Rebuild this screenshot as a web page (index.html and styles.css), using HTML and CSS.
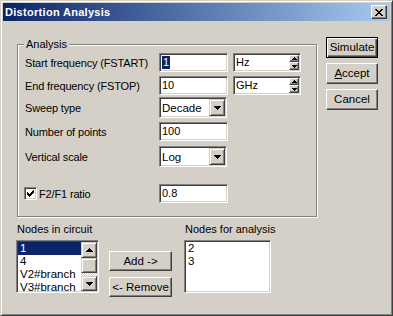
FILE: index.html
```html
<!DOCTYPE html>
<html>
<head>
<meta charset="utf-8">
<link rel="stylesheet" href="styles.css">
</head>
<body>
<div class="window">
  <div class="titlebar">
    <span class="title">Distortion Analysis</span>
    <div class="close raised">
      <svg width="8" height="7" viewBox="0 0 8 7"><path d="M0 0h2v1H0zM6 0h2v1H6zM1 1h2v1H1zM5 1h2v1H5zM2 2h4v1H2zM3 3h2v1H3zM2 4h4v1H2zM1 5h2v1H1zM5 5h2v1H5zM0 6h2v1H0zM6 6h2v1H6z" fill="#000"/></svg>
    </div>
  </div>
  <div class="client">
    <div class="main">
      <div class="group">
        <span class="group-label">Analysis</span>
        <div class="row r1">
          <span class="lbl">Start frequency (FSTART)</span>
          <div class="edit"><span class="hl">1</span></div>
          <div class="edit spin">
            <span class="spin-text">Hz</span>
            <div class="spinbtns">
              <div class="sbtn up raised"><svg width="5" height="3" viewBox="0 0 5 3"><path d="M2 0h1v1H2zM1 1h3v1H1zM0 2h5v1H0z"/></svg></div>
              <div class="sbtn dn raised"><svg width="5" height="3" viewBox="0 0 5 3"><path d="M0 0h5v1H0zM1 1h3v1H1zM2 2h1v1H2z"/></svg></div>
            </div>
          </div>
        </div>
        <div class="row r2">
          <span class="lbl">End frequency (FSTOP)</span>
          <div class="edit">10</div>
          <div class="edit spin">
            <span class="spin-text">GHz</span>
            <div class="spinbtns">
              <div class="sbtn up raised"><svg width="5" height="3" viewBox="0 0 5 3"><path d="M2 0h1v1H2zM1 1h3v1H1zM0 2h5v1H0z"/></svg></div>
              <div class="sbtn dn raised"><svg width="5" height="3" viewBox="0 0 5 3"><path d="M0 0h5v1H0zM1 1h3v1H1zM2 2h1v1H2z"/></svg></div>
            </div>
          </div>
        </div>
        <div class="row r3">
          <span class="lbl">Sweep type</span>
          <div class="combo">
            <span class="combo-text">Decade</span>
            <div class="dropbtn raised"><svg width="7" height="4" viewBox="0 0 7 4"><path d="M0 0h7v1H0zM1 1h5v1H1zM2 2h3v1H2zM3 3h1v1H3z"/></svg></div>
          </div>
        </div>
        <div class="row r4">
          <span class="lbl">Number of points</span>
          <div class="edit">100</div>
        </div>
        <div class="row r5">
          <span class="lbl">Vertical scale</span>
          <div class="combo">
            <span class="combo-text">Log</span>
            <div class="dropbtn raised"><svg width="7" height="4" viewBox="0 0 7 4"><path d="M0 0h7v1H0zM1 1h5v1H1zM2 2h3v1H2zM3 3h1v1H3z"/></svg></div>
          </div>
        </div>
        <div class="row r6">
          <span class="lbl chk-lbl">
            <span class="chk"><svg width="7" height="7" viewBox="0 0 7 7"><path d="M6 0h1v1H6zM5 1h2v1H5zM0 2h1v1H0zM4 2h3v1H4zM0 3h2v1H0zM3 3h3v1H3zM0 4h5v1H0zM1 5h3v1H1zM2 6h1v1H2z"/></svg></span>F2/F1 ratio
          </span>
          <div class="edit">0.8</div>
        </div>
      </div>
      <div class="nodes">
        <div class="ncol left">
          <div class="nlabel">Nodes in circuit</div>
          <div class="list list-left">
            <div class="items">
              <div class="item selected">1</div>
              <div class="item">4</div>
              <div class="item">V2#branch</div>
              <div class="item">V3#branch</div>
            </div>
            <div class="scrollbar">
              <div class="sb-btn sb-up"><svg width="7" height="4" viewBox="0 0 7 4"><path d="M3 0h1v1H3zM2 1h3v1H2zM1 2h5v1H1zM0 3h7v1H0z"/></svg></div>
              <div class="sb-thumb"></div>
              <div class="sb-track"></div>
              <div class="sb-btn sb-dn"><svg width="7" height="4" viewBox="0 0 7 4"><path d="M0 0h7v1H0zM1 1h5v1H1zM2 2h3v1H2zM3 3h1v1H3z"/></svg></div>
            </div>
          </div>
        </div>
        <div class="mid-btns">
          <div class="btn mid">Add -&gt;</div>
          <div class="btn mid">&lt;- Remove</div>
        </div>
        <div class="ncol right">
          <div class="nlabel">Nodes for analysis</div>
          <div class="list list-right">
            <div class="items">
              <div class="item">2</div>
              <div class="item">3</div>
            </div>
          </div>
        </div>
      </div>
    </div>
    <div class="side">
      <div class="btn side-btn default">Simulate</div>
      <div class="btn side-btn"><span class="ul">A</span>ccept</div>
      <div class="btn side-btn">Cancel</div>
    </div>
  </div>
</div>
</body>
</html>
```

FILE: styles.css
```css
html, body {
  margin: 0;
  padding: 0;
  background: #d4d0c8;
}

body {
  font-family: "Liberation Sans", Arial, sans-serif;
  font-size: 11px;
  color: #000;
}

.window {
  width: 393px;
  height: 316px;
  box-sizing: border-box;
  background: #d4d0c8;
  border: 1px solid;
  border-color: #d4d0c8 #404040 #404040 #d4d0c8;
  box-shadow: inset 1px 1px #fff, inset -1px -1px #808080;
  padding: 2px;
  display: flex;
  flex-direction: column;
}

.titlebar {
  height: 18px;
  flex: none;
  display: flex;
  align-items: center;
  padding: 0 3px 0 2px;
  background: linear-gradient(to right, #0a246a, #a6caf0);
  color: #fff;
}

.title {
  font-weight: bold;
  font-size: 11px;
  letter-spacing: 0.3px;
  line-height: 13px;
}

.raised {
  box-sizing: border-box;
  background: #d4d0c8;
  border: 1px solid;
  border-color: #fff #404040 #404040 #fff;
  box-shadow: inset -1px -1px #808080;
  display: flex;
  align-items: center;
  justify-content: center;
}

.close {
  margin-left: auto;
  width: 16px;
  height: 14px;
}

.close svg {
  margin-left: -1px;
}

.client {
  display: flex;
  padding-left: 14px;
}

.main {
  width: 301px;
  flex: none;
}

.group {
  position: relative;
  margin-top: 23px;
  width: 300px;
  box-sizing: border-box;
  border: 1px solid #808080;
  box-shadow: inset 1px 1px #fff, 1px 1px #fff;
  padding: 8px 0 13px 7px;
}

.group-label {
  position: absolute;
  top: -7px;
  left: 6px;
  padding: 0 2px 0 2px;
  background: #d4d0c8;
  line-height: 13px;
}

.row {
  display: flex;
  align-items: center;
}

.r1 { height: 19px; }
.r2 { height: 19px; margin-top: 4px; }
.r3 { height: 21px; margin-top: 2px; }
.r4 { height: 19px; margin-top: 4px; }
.r5 { height: 21px; margin-top: 5px; }
.r6 { height: 19px; margin-top: 17px; }

.lbl {
  width: 134px;
  flex: none;
  white-space: nowrap;
  letter-spacing: -0.15px;
}

.chk-lbl {
  display: flex;
  align-items: center;
}

.chk {
  width: 13px;
  height: 13px;
  box-sizing: border-box;
  margin-left: -1px;
  margin-right: 2px;
  background: #fff;
  border: 1px solid;
  border-color: #808080 #fff #fff #808080;
  box-shadow: inset 1px 1px #404040, inset -1px -1px #d4d0c8;
  display: flex;
  align-items: center;
  justify-content: center;
}

.edit {
  width: 69px;
  height: 19px;
  flex: none;
  box-sizing: border-box;
  background: #fff;
  border: 1px solid;
  border-color: #808080 #fff #fff #808080;
  box-shadow: inset 1px 1px #404040, inset -1px -1px #d4d0c8;
  padding-left: 2px;
  display: flex;
  align-items: center;
  line-height: 13px;
}

.hl {
  background: #0a246a;
  color: #fff;
  padding: 0 1px;
  margin-left: 0;
}

.spin {
  width: 68px;
  margin-left: 5px;
  padding: 1px 1px 1px 2px;
}

.spin-text {
  flex: 1;
}

.spinbtns {
  width: 10px;
  height: 15px;
  display: flex;
  flex-direction: column;
}

.sbtn {
  width: 10px;
}

.sbtn.up { height: 7px; }
.sbtn.dn { height: 8px; }

.combo {
  width: 68px;
  height: 21px;
  flex: none;
  box-sizing: border-box;
  background: #fff;
  border: 1px solid;
  border-color: #808080 #fff #fff #808080;
  box-shadow: inset 1px 1px #404040, inset -1px -1px #d4d0c8;
  padding: 1px;
  display: flex;
  align-items: stretch;
}

.combo-text {
  flex: 1;
  padding-left: 1px;
  display: flex;
  align-items: center;
  font-size: 11.5px;
}

.dropbtn {
  width: 16px;
  border-color: #d4d0c8 #404040 #404040 #d4d0c8;
  box-shadow: inset 1px 1px #fff, inset -1px -1px #808080;
}

.nodes {
  display: flex;
  margin-top: 6px;
}

.ncol.left {
  margin-left: -1px;
  width: 83px;
}

.ncol.right {
  margin-left: 12px;
  width: 87px;
}

.nlabel {
  line-height: 13px;
  padding-left: 1px;
  margin-bottom: 4px;
  white-space: nowrap;
}

.list {
  height: 53px;
  box-sizing: border-box;
  background: #fff;
  border: 1px solid;
  border-color: #808080 #fff #fff #808080;
  box-shadow: inset 1px 1px #404040, inset -1px -1px #d4d0c8;
  padding: 1px;
  display: flex;
  overflow: hidden;
}

.items {
  flex: 1;
  overflow: hidden;
}

.item {
  height: 13px;
  line-height: 13px;
  padding-left: 2px;
  white-space: nowrap;
  font-size: 11.5px;
}

.item.selected {
  background: #0a246a;
  color: #fff;
}

.scrollbar {
  width: 16px;
  display: flex;
  flex-direction: column;
}

.sb-btn, .sb-thumb {
  box-sizing: border-box;
  background: #d4d0c8;
  border: 1px solid;
  border-color: #d4d0c8 #404040 #404040 #d4d0c8;
  box-shadow: inset 1px 1px #fff, inset -1px -1px #808080;
  display: flex;
  align-items: center;
  justify-content: center;
}

.sb-up { height: 16px; }
.sb-thumb { height: 15px; }
.sb-dn { height: 15px; }

.sb-track {
  flex: 1;
  background: repeating-conic-gradient(#d4d0c8 0 25%, #fff 0 50%) 0 0 / 2px 2px;
}

.mid-btns {
  margin-left: 10px;
  padding-top: 28px;
  display: flex;
  flex-direction: column;
  gap: 6px;
}

.btn {
  box-sizing: border-box;
  background: #d4d0c8;
  border: 1px solid;
  border-color: #fff #404040 #404040 #fff;
  box-shadow: inset -1px -1px #808080;
  display: flex;
  align-items: center;
  justify-content: center;
  line-height: 13px;
  white-space: nowrap;
  font-size: 11.5px;
}

.btn.mid {
  width: 63px;
  height: 20px;
}

.side {
  margin-left: 8px;
  padding-top: 16px;
  display: flex;
  flex-direction: column;
  gap: 5px;
}

.side-btn {
  width: 52px;
  height: 21px;
}

.btn.default {
  border-color: #000;
  box-shadow: inset 1px 1px #fff, inset -1px -1px #404040, inset -2px -2px #808080;
}

.ul {
  text-decoration: underline;
}
```
